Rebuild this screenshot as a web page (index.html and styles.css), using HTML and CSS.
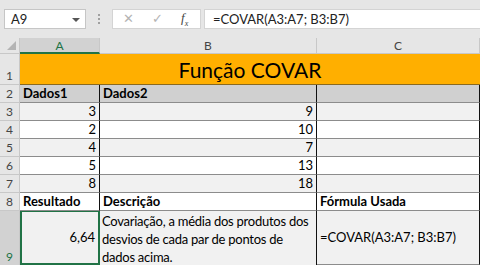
FILE: index.html
```html
<!DOCTYPE html>
<html lang="pt">
<head>
    <meta charset="UTF-8">
    <title>Função COVAR</title>
    <link rel="stylesheet" href="styles.css">
</head>
<body>
    <div class="bar">
        <div class="namebox">A9<span class="caret"></span></div>
        <div class="dots"></div>
        <div class="fnbox">
            <span class="ico">&#x2715;</span>
            <span class="ico">&#x2713;</span>
            <span class="fx">f<sub>x</sub></span>
        </div>
        <div class="formula">=COVAR(A3:A7; B3:B7)</div>
    </div>

    <div class="sheet">
        <!-- cabeçalhos -->
        <div class="corner"><span class="tri"></span></div>
        <div class="colh sel">A</div>
        <div class="colh">B</div>
        <div class="colh">C</div>

        <div class="rowh r1">1</div>
        <div class="title">Função COVAR</div>

        <div class="rowh">2</div>
        <div class="c head">Dados1</div>
        <div class="c head">Dados2</div>
        <div class="c head"></div>

        <div class="rowh">3</div>
        <div class="c num band">3</div>
        <div class="c num band">9</div>
        <div class="c band"></div>

        <div class="rowh">4</div>
        <div class="c num">2</div>
        <div class="c num">10</div>
        <div class="c"></div>

        <div class="rowh">5</div>
        <div class="c num band">4</div>
        <div class="c num band">7</div>
        <div class="c band"></div>

        <div class="rowh">6</div>
        <div class="c num">5</div>
        <div class="c num">13</div>
        <div class="c"></div>

        <div class="rowh">7</div>
        <div class="c num band">8</div>
        <div class="c num band">18</div>
        <div class="c band"></div>

        <div class="rowh">8</div>
        <div class="c b">Resultado</div>
        <div class="c b">Descrição</div>
        <div class="c b">Fórmula Usada</div>

        <div class="rowh r9 hl">9</div>
        <div class="c num band mid active">6,64</div>
        <div class="c band wrap">Covariação, a média dos produtos dos desvios de cada par de pontos de dados acima.</div>
        <div class="c band mid">=COVAR(A3:A7; B3:B7)</div>
    </div>
</body>
</html>
```

FILE: styles.css
```css
*{box-sizing:border-box;}
body{margin:0;width:480px;height:265px;overflow:hidden;background:#fff;font-family:"Lato","Open Sans",sans-serif;color:#000;}

.bar{height:38px;background:#e6e6e6;display:flex;align-items:flex-start;padding-top:9px;padding-left:4px;}
.namebox{width:82px;height:20px;background:#fff;border:1px solid #c6c6c6;font-size:13px;line-height:18px;padding-left:6px;color:#222;position:relative;}
.caret{position:absolute;right:5px;top:8px;border-left:4px solid transparent;border-right:4px solid transparent;border-top:4px solid #555;}
.dots{width:26px;height:20px;position:relative;}
.dots::before{content:"";position:absolute;left:12px;top:5px;width:2px;height:10px;background:repeating-linear-gradient(#a0a0a0 0 2px,transparent 2px 4px);}
.fnbox{width:89px;height:20px;background:#fff;border:1px solid #d4d4d4;display:flex;align-items:center;padding-left:10px;color:#b4b4b4;}
.ico{width:29px;font-size:13px;line-height:18px;font-family:"DejaVu Sans",sans-serif;}
.fx{font-family:"Liberation Serif",serif;font-style:italic;font-size:13px;color:#444;}
.fx sub{font-size:8px;}
.formula{flex:1;height:20px;margin-left:3px;background:#fff;border:1px solid #d4d4d4;border-right:none;font-size:13px;line-height:18px;padding-left:8px;color:#222;}

.sheet{display:grid;grid-template-columns:20px 80px 217px 163px;grid-template-rows:16px 31px repeat(7,18px) 54px;}
.corner{background:#e6e6e6;border-right:1px solid #c8c8c8;border-bottom:1px solid #c8c8c8;position:relative;}
.tri{position:absolute;right:3px;bottom:3px;border-left:9px solid transparent;border-bottom:9px solid #b4b4b4;}
.colh{background:#e6e6e6;border-right:1px solid #c8c8c8;border-bottom:1px solid #c8c8c8;font-size:12px;line-height:15px;text-align:center;color:#444;}
.colh.sel{background:#d2d2d2;border-bottom:2px solid #217346;color:#217346;}
.rowh{background:#e6e6e6;border-right:1px solid #c8c8c8;border-bottom:1px solid #c8c8c8;font-size:12px;text-align:center;color:#444;display:flex;align-items:flex-end;justify-content:center;line-height:17px;}
.rowh.hl{background:#d2d2d2;color:#217346;border-bottom:none;}

.title{grid-column:2 / 5;background:#ffaf00;border-bottom:1px solid #8a6a20;font-size:21px;text-align:center;line-height:31px;}
.c{border-right:1px solid #111;border-bottom:1px solid #8c8c8c;font-size:13px;line-height:17px;padding:0 3px;white-space:nowrap;overflow:hidden;}
.head{background:#d0d0d0;font-weight:bold;}
.b{font-weight:bold;}
.band{background:#f1f1f1;}
.num{text-align:right;}
.mid{display:flex;align-items:center;}
.num.mid{justify-content:flex-end;}
.wrap{white-space:normal;padding:1px 2px 0 2px;line-height:18px;letter-spacing:-0.25px;border-bottom:none;}
.active{border:2px solid #217346;border-top:1px solid #217346;}
```
